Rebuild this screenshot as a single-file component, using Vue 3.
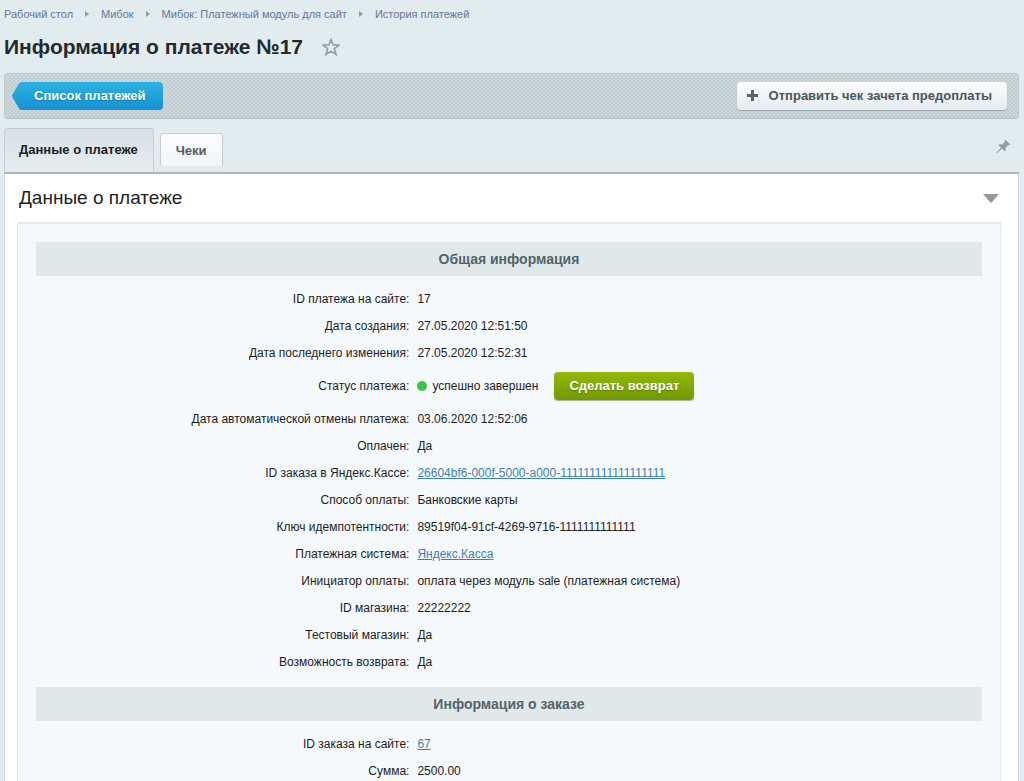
<script setup>
const crumbs = ['Рабочий стол', 'Мибок', 'Мибок: Платежный модуль для сайт', 'История платежей']
const sections = [
  {
    title: 'Общая информация',
    rows: [
      { label: 'ID платежа на сайте:', value: '17' },
      { label: 'Дата создания:', value: '27.05.2020 12:51:50' },
      { label: 'Дата последнего изменения:', value: '27.05.2020 12:52:31' },
      { label: 'Статус платежа:', value: 'успешно завершен', status: true },
      { label: 'Дата автоматической отмены платежа:', value: '03.06.2020 12:52:06' },
      { label: 'Оплачен:', value: 'Да' },
      { label: 'ID заказа в Яндекс.Кассе:', value: '26604bf6-000f-5000-a000-111111111111111111', link: true },
      { label: 'Способ оплаты:', value: 'Банковские карты' },
      { label: 'Ключ идемпотентности:', value: '89519f04-91cf-4269-9716-1111111111111' },
      { label: 'Платежная система:', value: 'Яндекс.Касса', link: true },
      { label: 'Инициатор оплаты:', value: 'оплата через модуль sale (платежная система)' },
      { label: 'ID магазина:', value: '22222222' },
      { label: 'Тестовый магазин:', value: 'Да' },
      { label: 'Возможность возврата:', value: 'Да' }
    ]
  },
  {
    title: 'Информация о заказе',
    rows: [
      { label: 'ID заказа на сайте:', value: '67', link: true },
      { label: 'Сумма:', value: '2500.00' }
    ]
  }
]
</script>

<template>
  <main class="page">
    <nav class="crumbs" aria-label="Навигация">
      <template v-for="(c, i) in crumbs" :key="c">
        <svg v-if="i" class="sep" viewBox="0 0 4 6" aria-hidden="true"><path d="M0 0 4 3 0 6Z" /></svg>
        <a href="#">{{ c }}</a>
      </template>
    </nav>

    <header class="heading">
      <h1>Информация о платеже №17</h1>
      <button class="icon-btn" type="button" aria-label="В избранное">
        <svg class="star" viewBox="0 0 16 16"><path d="M8 1.2 9.9 6.1 15.1 6.2 11 9.4 12.5 14.7 8 11.7 3.5 14.7 5 9.4 .9 6.2 6.1 6.1Z" /></svg>
      </button>
    </header>

    <div class="toolbar">
      <a class="back" href="#">
        <svg class="back-tip" viewBox="0 0 10 28" preserveAspectRatio="none" aria-hidden="true">
          <defs>
            <linearGradient id="tip" x1="0" y1="0" x2="0" y2="1">
              <stop offset="0" stop-color="#2cb2e2" />
              <stop offset="1" stop-color="#1591d2" />
            </linearGradient>
          </defs>
          <path d="M10 0H9.500Q8 0 7 1.500L.5 12.500Q-.3 14 .5 15.500L7 26.500Q8 28 9.500 28H10Z" fill="url(#tip)" />
        </svg>
        <span class="back-text">Список платежей</span>
      </a>
      <button class="send" type="button">
        <svg class="plus" viewBox="0 0 11 11" aria-hidden="true"><path d="M4 0h3v4h4v3H7v4H4V7H0V4h4Z" /></svg>
        Отправить чек зачета предоплаты
      </button>
    </div>

    <div class="tabs">
      <button class="tab active" type="button">Данные о платеже</button>
      <button class="tab" type="button">Чеки</button>
      <button class="icon-btn pin-btn" type="button" aria-label="Закрепить">
        <svg class="pin" viewBox="0 0 15 15"><path d="M9.300 .7 14.300 5.500 13.200 6.300 12.200 6 9.600 8.800 9.900 11.200 8.800 12.300 6 9.700 1 14.300.4 14 4.900 8.700 2.500 6.100 3.500 5.200 6.100 5.400 9 2.700 8.500 1.600Z" /></svg>
      </button>
    </div>

    <section class="panel">
      <div class="panel-head">
        <h2>Данные о платеже</h2>
        <button class="icon-btn" type="button" aria-label="Свернуть">
          <svg class="arrow" viewBox="0 0 16 9"><path d="M0 0H16L9 8Q8 9 7 8Z" /></svg>
        </button>
      </div>
      <div class="content">
        <table>
          <colgroup>
            <col class="label-col">
            <col>
          </colgroup>
          <tbody v-for="s in sections" :key="s.title">
            <tr>
              <th class="section" colspan="2" scope="colgroup">{{ s.title }}</th>
            </tr>
            <tr v-for="(r, i) in s.rows" :key="r.label" :class="{ first: i === 0, last: i === s.rows.length - 1 }">
              <th class="label" scope="row">{{ r.label }}</th>
              <td>
                <div v-if="r.status" class="status">
                  <span class="dot"></span>
                  <span>{{ r.value }}</span>
                  <button class="refund" type="button">Сделать возврат</button>
                </div>
                <a v-else-if="r.link" href="#">{{ r.value }}</a>
                <template v-else>{{ r.value }}</template>
              </td>
            </tr>
          </tbody>
        </table>
      </div>
    </section>
  </main>
</template>

<style>
html {
  scrollbar-width: none;
}
body {
  background: #e2ebed;
}
</style>

<style scoped>
.page {
  box-sizing: border-box;
  padding: 0 5px 0 4px;
  font-family: "Liberation Sans", Arial, sans-serif;
  font-size: 12px;
  color: #222;
}
button {
  font-family: inherit;
  cursor: pointer;
}
.icon-btn {
  display: flex;
  padding: 0;
  border: 0;
  background: none;
}
.crumbs {
  display: flex;
  align-items: center;
  height: 27px;
  font-size: 11px;
}
.crumbs a {
  color: #64779c;
  text-decoration: none;
}
.sep {
  width: 4px;
  height: 6px;
  margin: 0 12px;
  fill: #8d9ca6;
}
.heading {
  display: flex;
  align-items: center;
  gap: 19px;
  height: 46px;
  box-sizing: border-box;
  padding-bottom: 6px;
}
h1 {
  margin: 0;
  font-size: 21px;
  line-height: 26px;
  color: #222a2e;
}
.star {
  width: 18px;
  height: 18px;
  fill: none;
  stroke: #929ca1;
  stroke-width: 1.4;
}
.toolbar {
  display: flex;
  align-items: center;
  justify-content: space-between;
  box-sizing: border-box;
  height: 46px;
  padding: 0 11px 0 7px;
  border: 1px solid #c0cacd;
  border-bottom-color: #b0babd;
  border-radius: 4px;
  background: repeating-conic-gradient(#c3cdd0 0 25%, #ced7da 0 50%) 0 0 / 4px 4px;
}
.back {
  display: flex;
  height: 28px;
  color: #fff;
  font-size: 13px;
  font-weight: bold;
  line-height: 28px;
  text-decoration: none;
  text-shadow: 0 1px 1px #1576a5;
}
.back-tip {
  width: 10px;
  height: 28px;
}
.back-text {
  padding: 0 17px 0 12px;
  border-radius: 0 4px 4px 0;
  background: linear-gradient(#2cb2e2, #1591d2);
}
.send {
  display: flex;
  align-items: center;
  gap: 11px;
  height: 28px;
  padding: 0 15px 2px 10px;
  border: 0;
  border-radius: 4px;
  background: linear-gradient(#fdfefe, #e4ecef);
  box-shadow: 0 1px 1px #98a5aa;
  color: #49565b;
  font-size: 13px;
  font-weight: bold;
}
.plus {
  width: 11px;
  height: 11px;
  fill: #59666b;
}
.tabs {
  display: flex;
  align-items: flex-end;
  gap: 6px;
  height: 55px;
  box-sizing: border-box;
  padding-bottom: 6px;
  border-bottom: 2px solid #acb7bd;
}
.tab {
  height: 33px;
  padding: 0 15px;
  border: 1px solid #c5cfd3;
  border-bottom: 0;
  border-radius: 4px 4px 0 0;
  background: linear-gradient(#fcfdfe, #f1f5f7);
  color: #555f63;
  font-size: 13px;
  font-weight: bold;
}
.tab.active {
  height: 44px;
  margin-bottom: -6px;
  padding: 0 15px 2px 14px;
  background: linear-gradient(#d7e0e4, #e7eef1);
  color: #1b2226;
}
.pin-btn {
  margin: 0 8px 12px auto;
}
.pin {
  width: 15px;
  height: 15px;
  fill: #929b9f;
}
.panel {
  padding: 0 17px 0 12px;
  border: 1px solid #ced7da;
  border-top: 0;
  background: #fff;
}
.panel-head {
  display: flex;
  align-items: center;
  justify-content: space-between;
  height: 48px;
  padding: 0 2px;
}
h2 {
  margin: 0;
  font-size: 19px;
  font-weight: normal;
  color: #222;
}
.arrow {
  width: 16px;
  height: 9px;
  fill: #929798;
}
.content {
  padding: 18px;
  border: 1px solid #e4e8ea;
  border-top-width: 2px;
  background: #f5f9fb;
}
table {
  width: 100%;
  border-collapse: collapse;
  table-layout: fixed;
}
.label-col {
  width: 40%;
}
td,
th {
  height: 27px;
  padding: 0;
}
td {
  padding-left: 3px;
  color: #1c1c1c;
}
.label {
  padding-right: 5px;
  font-weight: normal;
  text-align: right;
  color: #1c1c1c;
}
.section {
  height: 34px;
  background: #e1e8ea;
  color: #526469;
  font-size: 14px;
  line-height: 16px;
  text-align: center;
}
.first > * {
  padding-top: 9px;
}
.last > * {
  padding-bottom: 12px;
}
td a {
  color: #3f7fb0;
}
.status {
  display: flex;
  align-items: center;
  height: 39px;
}
.dot {
  width: 10px;
  height: 10px;
  margin-right: 5px;
  border-radius: 50%;
  background: #3ac545;
}
.refund {
  height: 28px;
  margin-left: 16px;
  padding: 0 15px;
  border: 0;
  border-radius: 4px;
  background: linear-gradient(#93b90a, #719800);
  box-shadow: 0 1px 1px #a7b38a;
  color: #fff;
  font-size: 13px;
  font-weight: bold;
  text-shadow: 0 1px 1px #5d7c00;
}
</style>
